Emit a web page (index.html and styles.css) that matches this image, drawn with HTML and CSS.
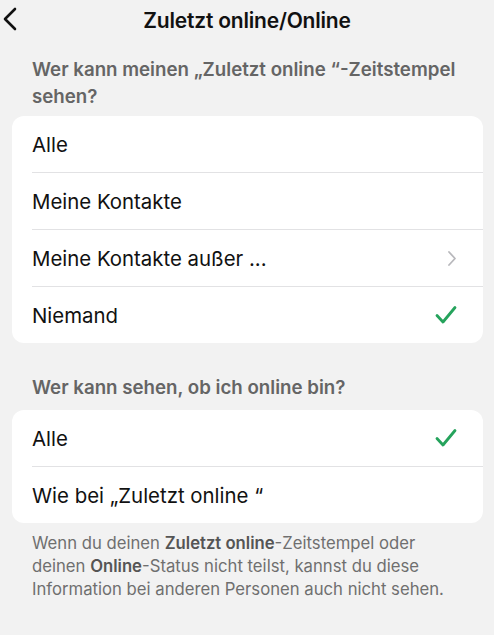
FILE: index.html
```html
<!DOCTYPE html>
<html lang="de">
<head>
<meta charset="utf-8">
<link rel="stylesheet" href="styles.css">
</head>
<body>
<header class="nav">
  <svg class="back" width="16" height="24" viewBox="0 0 16 24"><path d="M13 2 L3 12 L13 22" fill="none" stroke="#111" stroke-width="2.6" stroke-linecap="round" stroke-linejoin="round"/></svg>
  <h1 class="title">Zuletzt online/Online</h1>
</header>
<main class="content">
  <h2 class="section-head first">Wer kann meinen „Zuletzt online “-Zeitstempel sehen?</h2>
  <ul class="card">
    <li class="row">Alle</li>
    <li class="row">Meine Kontakte</li>
    <li class="row">Meine Kontakte außer ...<svg class="chev" width="10" height="17" viewBox="0 0 10 17"><path d="M2 2 L8 8.5 L2 15" fill="none" stroke="#b8b8bc" stroke-width="1.8" stroke-linecap="round" stroke-linejoin="round"/></svg></li>
    <li class="row">Niemand<svg class="check" width="22" height="20" viewBox="0 0 22 20"><path d="M2 10.5 L8 17 L20 2.5" fill="none" stroke="#25a35c" stroke-width="2.8" stroke-linecap="round" stroke-linejoin="round"/></svg></li>
  </ul>
  <h2 class="section-head second">Wer kann sehen, ob ich online bin?</h2>
  <ul class="card">
    <li class="row">Alle<svg class="check" width="22" height="20" viewBox="0 0 22 20"><path d="M2 10.5 L8 17 L20 2.5" fill="none" stroke="#25a35c" stroke-width="2.8" stroke-linecap="round" stroke-linejoin="round"/></svg></li>
    <li class="row">Wie bei „Zuletzt online “</li>
  </ul>
  <p class="footer">Wenn du deinen <b>Zuletzt online</b>-Zeitstempel oder deinen <b>Online</b>-Status nicht teilst, kannst du diese Information bei anderen Personen auch nicht sehen.</p>
</main>
</body>
</html>
```
FILE: styles.css
```css
* { box-sizing: border-box; }
html, body { margin: 0; padding: 0; }
body {
  background: #f2f2f2;
  font-family: Inter, "Noto Sans", sans-serif;
  color: #111;
  width: 494px;
  height: 635px;
  overflow: hidden;
}
.nav {
  height: 40px;
  display: flex;
  align-items: center;
  justify-content: center;
  position: relative;
}
.back { position: absolute; left: 2px; top: 7px; }
.title {
  margin: 0;
  font-size: 21px;
  font-weight: 600;
  letter-spacing: -0.2px;
}
.content { padding: 0 11px 0 12px; }
.section-head {
  margin: 0;
  padding: 0 20px;
  font-size: 18.7px;
  font-weight: 600;
  line-height: 27px;
  color: #656565;
}
.section-head.first { margin-top: 16px; margin-bottom: 6px; }
.section-head.second { margin-top: 31px; margin-bottom: 9px; }
.card {
  list-style: none;
  margin: 0;
  padding: 0 0 0 20px;
  background: #fff;
  border-radius: 12px;
}
.row {
  height: 57px;
  display: flex;
  align-items: center;
  justify-content: space-between;
  font-size: 20.4px;
  border-bottom: 1px solid #e2e2e4;
  padding-right: 26px;
}
.row:last-child { border-bottom: none; height: 56px; }
.footer {
  margin: 9px 0 0;
  padding: 0 33px 0 20px;
  font-size: 16.7px;
  line-height: 23px;
  color: #6f6f6f;
}
.footer b { font-weight: 600; color: #555; }
```
